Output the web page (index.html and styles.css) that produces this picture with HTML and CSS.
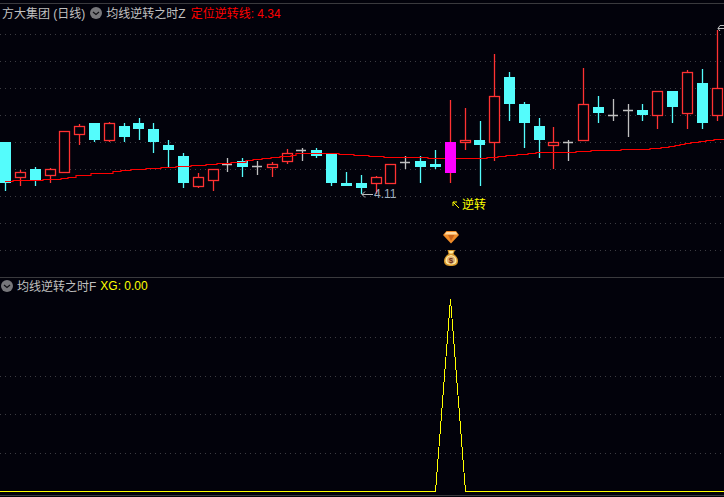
FILE: index.html
```html
<!DOCTYPE html>
<html lang="zh-CN">
<head>
  <meta charset="UTF-8" />
  <title>方大集团 (日线)</title>
  <link rel="stylesheet" href="styles.css">
</head>
<body>
  <section class="panel panel-main">
    <header class="panel-head">
      <span class="name">方大集团 (日线)</span>
      <svg class="toggle" viewBox="0 0 12 12"><circle cx="6" cy="6" r="6"/><path d="M3 5l3 2.5L9 5"/></svg>
      <span class="name">均线逆转之时Z</span>
      <span class="value-red">定位逆转线: 4.34</span>
    </header>
    <svg class="chart" viewBox="0 24 724 253">
      <path class="grid" d="M0 34.5H724M0 61.5H724M0 88.5H724M0 115.5H724M0 142.5H724M0 169.5H724M0 196.5H724M0 223.5H724M0 250.5H724"/>

      <!-- wicks -->
      <path class="wick-cyan" d="M5.5 183V191M35.5 167V186M94.5 140V142M124.5 123V142M139.5 118V140M153.5 123V153M168.5 140V167M183.5 153V188M242.5 158V177M316.5 148V158M331.5 183V186M346.5 172V183M361.5 175V194M420.5 156V183M435.5 150V169M480.5 121V186M509.5 72V121M524.5 102V148M539.5 118V158M598.5 96V123M642.5 104V121M672.5 107V123M702.5 69V129"/>
      <path class="wick-red" d="M20.5 170V186M50.5 168V183M79.5 124V145M109.5 122V142M198.5 173V188M213.5 181V191M272.5 162V177M287.5 149V164M376.5 176V194M450.5 100V183M465.5 108V150M494.5 54V161M553.5 127V169M583.5 68V104M657.5 116V129M687.5 70V129M717.5 30V121"/>
      <path class="wick-grey" d="M222 164.5H232M227.5 158V172M252 166.5H262M257.5 161V175M296 150.5H306M302.5 148V161M400 162.5H410M405.5 156V169M563 142.5H573M568.5 140V161M608 115.5H618M613.5 99V121M623 110.5H633M628.5 104V137"/>

      <!-- falling days -->
      <g class="body-cyan">
        <rect x="0" y="142" width="11" height="41"/>
        <rect x="30" y="169" width="11" height="12"/>
        <rect x="89" y="123" width="11" height="17"/>
        <rect x="119" y="126" width="11" height="11"/>
        <rect x="133" y="123" width="11" height="6"/>
        <rect x="148" y="129" width="11" height="13"/>
        <rect x="163" y="145" width="11" height="5"/>
        <rect x="178" y="156" width="11" height="27"/>
        <rect x="237" y="161" width="11" height="6"/>
        <rect x="311" y="150" width="11" height="6"/>
        <rect x="326" y="154" width="11" height="29"/>
        <rect x="341" y="183" width="11" height="3"/>
        <rect x="356" y="183" width="11" height="5"/>
        <rect x="415" y="161" width="11" height="6"/>
        <rect x="430" y="164" width="11" height="3"/>
        <rect x="474" y="140" width="11" height="5"/>
        <rect x="504" y="77" width="11" height="27"/>
        <rect x="519" y="104" width="11" height="19"/>
        <rect x="534" y="126" width="11" height="14"/>
        <rect x="593" y="107" width="11" height="6"/>
        <rect x="637" y="110" width="11" height="5"/>
        <rect x="667" y="91" width="11" height="16"/>
        <rect x="697" y="83" width="11" height="40"/>
      </g>

      <!-- rising days -->
      <g class="body-red">
        <rect x="15.5" y="172.5" width="10" height="5"/>
        <rect x="45.5" y="169.5" width="10" height="6"/>
        <rect x="59.5" y="131.5" width="10" height="41"/>
        <rect x="74.5" y="126.5" width="10" height="8"/>
        <rect x="104.5" y="123.5" width="10" height="17"/>
        <rect x="193.5" y="177.5" width="10" height="9"/>
        <rect x="208.5" y="169.5" width="10" height="11"/>
        <rect x="267.5" y="164.5" width="10" height="3"/>
        <rect x="282.5" y="153.5" width="10" height="8"/>
        <rect x="371.5" y="177.5" width="10" height="6"/>
        <rect x="385.5" y="164.5" width="10" height="19"/>
        <rect x="460.5" y="140.5" width="10" height="2"/>
        <rect x="489.5" y="96.5" width="10" height="46"/>
        <rect x="548.5" y="142.5" width="10" height="3"/>
        <rect x="578.5" y="104.5" width="10" height="36"/>
        <rect x="652.5" y="91.5" width="10" height="24"/>
        <rect x="682.5" y="72.5" width="10" height="41"/>
        <rect x="712.5" y="88.5" width="10" height="27"/>
      </g>

      <!-- moving average, stepped like the terminal draws it -->
      <polyline class="ma" points="5,181.5 13,181.5 13,180.5 43,180.5 43,179.5 61,179.5 61,178.5 68,178.5 68,177.5 76,177.5 76,175.5 91,175.5 91,173.5 113,173.5 113,171.5 121,171.5 121,170.5 131,170.5 131,169.5 146,169.5 146,168.5 161,168.5 161,167.5 176,167.5 176,166.5 191,166.5 191,165.5 206,165.5 206,164.5 217,164.5 217,163.5 231,163.5 231,162.5 246,162.5 246,160.5 253,160.5 253,159.5 262,159.5 262,158.5 271,158.5 271,157.5 280,157.5 280,156.5 291,156.5 291,155.5 296,155.5 296,153.5 339,153.5 339,154.5 354,154.5 354,155.5 369,155.5 369,156.5 384,156.5 384,157.5 428,157.5 428,158.5 487,158.5 487,157.5 498,157.5 498,156.5 506,156.5 506,155.5 517,155.5 517,154.5 528,154.5 528,153.5 536,153.5 536,152.5 576,152.5 576,151.5 591,151.5 591,150.5 621,150.5 621,149.5 650,149.5 650,148.5 661,148.5 661,147.5 669,147.5 669,146.5 675,146.5 675,145.5 680,145.5 680,144.5 685,144.5 685,143.5 691,143.5 691,142.5 699,142.5 699,141.5 706,141.5 706,140.5 714,140.5 714,139.5 724,139.5"/>

      <!-- signal day sits on top of the average -->
      <rect class="body-magenta" x="445" y="142" width="11" height="31"/>

      <!-- low / high price markers -->
      <path class="marker" d="M373 194.5H362M365 191.5L362 194.5L365 197.5"/>
      <text class="label-grey" x="374" y="198">4.11</text>
      <path class="marker" d="M724 28.5H718M720 25.5H724M720 25.5L718 28.5L720 31"/>

      <!-- signal arrow and label -->
      <path class="marker-yellow" d="M459 208L453 202M453 202V206M453 202H457"/>
      <text class="label-yellow" x="462" y="209">逆转</text>

      <!-- diamond -->
      <g>
        <path fill="#f08c28" d="M446.5 231H456L459 235L451 243.5L443 235Z"/>
        <path fill="#ffd9a0" d="M446.5 232H456L457.5 234.5H444.5Z"/>
        <path fill="#c9641a" d="M448 235H454.5L451 241Z"/>
      </g>

      <!-- money bag -->
      <g>
        <path fill="#d9992c" d="M447.5 250H455L453.5 254C456.5 255.5 458 258.5 458 261C458 265 455 266 451 266C447 266 444 265 444 261C444 258.5 445.5 255.5 448.5 254Z"/>
        <path fill="#ffeaa0" d="M449 251H453.5L452.5 253.5H449.5Z"/>
        <path fill="#ffeaa0" d="M445.5 260.5C445.5 257.5 447.5 255.5 451 255C454.5 255.5 456.5 257.5 456.5 260.5C456.5 263.5 454.5 264.5 451 264.5C447.5 264.5 445.5 263.5 445.5 260.5Z"/>
        <ellipse cx="451" cy="260" rx="4" ry="3.8" fill="#e0b070"/>
        <text class="bag-sign" x="451" y="263">$</text>
      </g>
    </svg>
  </section>

  <section class="panel panel-sub">
    <header class="panel-head panel-head-sub">
      <svg class="toggle" viewBox="0 0 12 12"><circle cx="6" cy="6" r="6"/><path d="M3 5l3 2.5L9 5"/></svg>
      <span class="name">均线逆转之时F</span>
      <span class="value-yellow">XG: 0.00</span>
    </header>
    <svg class="chart" viewBox="0 296 724 201">
      <path class="grid" d="M0 337.5H724M0 376.5H724M0 414.5H724M0 453.5H724"/>
      <polyline class="signal" points="0,491.5 435.5,491.5 450.5,299 465.5,491.5 724,491.5"/>
      <path class="baseline" d="M0 495.5H724"/>
    </svg>
  </section>
</body>
</html>
```

FILE: styles.css
```css
* {
  margin: 0;
  padding: 0;
  box-sizing: border-box;
}

body {
  width: 724px;
  height: 497px;
  overflow: hidden;
  padding-top: 3px;
  background: #02020b;
  font-family: "Liberation Sans", "Noto Sans CJK SC", sans-serif;
  font-size: 12px;
  color: #c0c0c0;
}

.panel {
  display: flex;
  flex-direction: column;
  border-top: 1px solid #3a3a3e;
}

.panel-main {
  height: 274px;
}

.panel-sub {
  height: 220px;
}

.panel-head {
  display: flex;
  align-items: center;
  height: 20px;
  padding: 0 0 3px 2px;
  white-space: nowrap;
}

.panel-head-sub {
  height: 18px;
  padding: 0 0 3px 1px;
}

.panel-head .toggle + .name {
  margin-left: 4px;
}

.panel-main .name:first-child {
  margin-right: 5px;
}

.value-red {
  margin-left: 5px;
  color: #ff0000;
}

.value-yellow {
  margin-left: 4px;
  color: #ffff00;
}

.toggle {
  width: 12px;
  height: 12px;
  flex: none;
}

.toggle circle {
  fill: #77777b;
}

.toggle path {
  fill: none;
  stroke: #101014;
  stroke-width: 1.2;
}

.chart {
  display: block;
  width: 724px;
  flex: 1;
  min-height: 0;
}

.grid {
  fill: none;
  stroke: #3c3c42;
  stroke-width: 1;
  stroke-dasharray: 1 4;
  shape-rendering: crispEdges;
}

.wick-cyan,
.wick-red,
.wick-grey {
  fill: none;
  stroke-width: 1.3;
}

.wick-cyan {
  stroke: #54fcfc;
}

.wick-red {
  stroke: #ff3232;
}

.wick-grey {
  stroke: #c0c0c0;
}

.body-cyan rect {
  fill: #54fcfc;
  shape-rendering: crispEdges;
}

.body-red rect {
  fill: #02020b;
  stroke: #ff3232;
  stroke-width: 1.3;
}

.body-magenta {
  fill: #ff00ff;
  shape-rendering: crispEdges;
}

.ma {
  fill: none;
  stroke: #ff0000;
  stroke-width: 1.15;
}

.signal {
  fill: none;
  stroke: #ffff00;
  stroke-width: 1;
  shape-rendering: crispEdges;
}

.baseline {
  stroke: #3a3a3e;
  stroke-width: 1;
  shape-rendering: crispEdges;
}

.marker {
  fill: none;
  stroke: #c0c0c0;
  stroke-width: 1;
}

.marker-yellow {
  fill: none;
  stroke: #ffff00;
  stroke-width: 1;
}

.label-grey {
  fill: #9fb0c0;
  font-size: 12px;
}

.label-yellow {
  fill: #ffff00;
  font-size: 12px;
}

.bag-sign {
  fill: #6e2c14;
  font-size: 8px;
  font-weight: bold;
  text-anchor: middle;
}
```
